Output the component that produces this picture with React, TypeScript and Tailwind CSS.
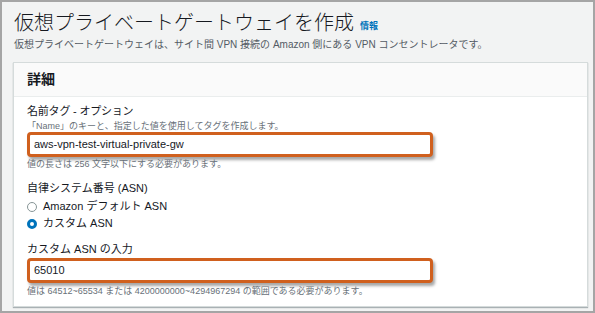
import * as React from "react";

const font = { fontFamily: '"Liberation Sans", "Noto Sans CJK JP", sans-serif' };

function AnnotatedInput({ value }: { value: string }) {
  return (
    <div className="w-[406px] h-[25px] rounded-[4px] border-[3px] border-[#d0601e] bg-white shadow-[2px_3px_3px_rgba(0,0,0,0.35)] flex items-center px-[4px]">
      <span className="text-[11px] leading-none text-[#16191f]">{value}</span>
    </div>
  );
}

function Radio({ checked, label }: { checked?: boolean; label: string }) {
  return (
    <div className="flex items-center gap-[6px] h-[17px]">
      {checked ? (
        <span className="w-[10px] h-[10px] rounded-full border-[3px] border-[#0073bb] bg-white" />
      ) : (
        <span className="w-[10px] h-[10px] rounded-full border border-[#879596] bg-white" />
      )}
      <span className="text-[11px] text-[#16191f]">{label}</span>
    </div>
  );
}

export default function App() {
  return (
    <div
      style={font}
      className="w-[595px] h-[313px] border-2 border-[#a5a5a5] bg-[#f2f3f3] pl-[11px] pr-[5px] pt-[9px] overflow-hidden"
    >
      <div className="flex items-end gap-[6px] h-[24px] pl-[1px]">
        <h1 className="text-[20px] leading-[24px] font-light text-[#16191f]">
          仮想プライベートゲートウェイを作成
        </h1>
        <a className="text-[9px] font-bold text-[#0073bb] mb-[2px]">情報</a>
      </div>
      <p className="mt-[3px] pl-[1px] text-[10px] leading-[14px] text-[#545b64]">
        仮想プライベートゲートウェイは、サイト間 VPN 接続の Amazon 側にある VPN コンセントレータです。
      </p>
      <div className="mt-[10px] h-[245px] bg-white border border-[#d5dbdb] shadow-[0_1px_1px_rgba(0,28,36,0.3)]">
        <div className="h-[34px] bg-[#fafafa] border-b border-[#eaeded] flex items-center pl-[13px]">
          <h2 className="text-[14px] font-bold text-[#16191f]">詳細</h2>
        </div>
        <div className="pl-[13px] pt-[7px]">
          <div className="text-[11px] leading-[14px] tracking-[-0.2px] text-[#16191f]">名前タグ - オプション</div>
          <div className="mt-[2px] text-[9px] leading-[12px] text-[#687078]">
            「Name」のキーと、指定した値を使用してタグを作成します。
          </div>
          <AnnotatedInput value="aws-vpn-test-virtual-private-gw" />
          <div className="mt-[1px] text-[9px] leading-[12px] text-[#687078]">
            値の長さは 256 文字以下にする必要があります。
          </div>
          <div className="mt-[10px] text-[11px] leading-[16px] text-[#16191f]">自律システム番号 (ASN)</div>
          <div className="mt-[2px]">
            <Radio label="Amazon デフォルト ASN" />
            <Radio checked label="カスタム ASN" />
          </div>
          <div className="mt-[9px] text-[11px] leading-[16px] text-[#16191f]">カスタム ASN の入力</div>
          <div className="mt-[1px]">
            <AnnotatedInput value="65010" />
          </div>
          <div className="mt-[2px] text-[9px] leading-[12px] text-[#687078]">
            値は 64512~65534 または 4200000000~4294967294 の範囲である必要があります。
          </div>
        </div>
      </div>
    </div>
  );
}
